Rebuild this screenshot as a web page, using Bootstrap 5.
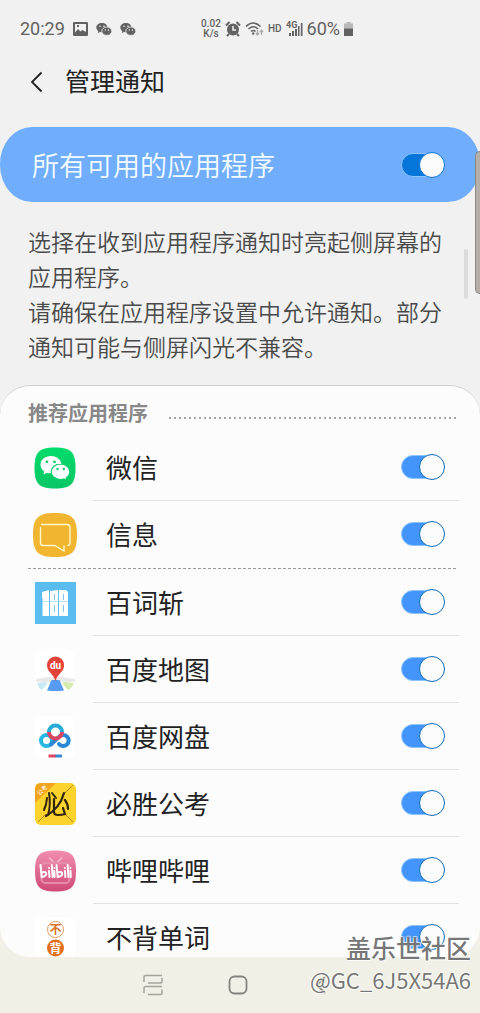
<!DOCTYPE html>
<html lang="zh-CN">
<head>
<meta charset="utf-8">
<meta name="viewport" content="width=device-width, initial-scale=1">
<title>管理通知</title>
<link href="https://cdn.jsdelivr.net/npm/bootstrap@5.3.0/dist/css/bootstrap.min.css" rel="stylesheet">
<style>
  body { font-family: Roboto, "Noto Sans CJK SC", sans-serif; background: #f1f1f1; color: #222; height: 100vh; }
  .status { height: 58px; padding: 0 127px 0 20px; color: #626262; font-size: 18px; line-height: 20px; }
  .rate { font-size: 10px; line-height: 10px; font-weight: 500; }
  .hd { font-size: 10px; line-height: 12px; font-weight: 500; }
  .appbar { height: 47px; padding-left: 30px; margin-bottom: 22px; gap: 21px; }
  .appbar h1 { font-size: 25px; line-height: 30px; font-weight: 400; padding-top: 2px; }
  .back { width: 14px; height: 24px; color: #222; }
  .master { height: 75px; padding: 0 35px 0 32px; border-radius: 32px / 37px; background: #70adfd; color: #f2fcff; font-size: 27px; line-height: 36px; font-weight: 350; }
  .intro { font-size: 23px; line-height: 35px; padding: 24px 30px 19px 28px; color: #4a4a4a; font-weight: 350; }
  .sheet-wrap { min-height: 0; background: linear-gradient(#f1f1f1 50%, #f0f0e6 50%); }
  .sheet { border-radius: 30px; background: #fcfcfc; border-top: 1px solid #d0d0d0; }
  .section-title { height: 48px; padding: 8px 24px 0 28px; gap: 21px; }
  .section-title h2 { font-size: 20px; line-height: 40px; font-weight: 700; color: #888; }
  .dots { height: 2px; background: repeating-linear-gradient(90deg, #a8a8a8 0 2px, transparent 2px 5px); }
  .dash { height: 1px; margin: 0 24px 0 28px; background: repeating-linear-gradient(90deg, #9c9c9c 0 3px, transparent 3px 5px); }
  .app { height: 67px; padding: 0 21px 0 33px; gap: 16px; }
  .app svg { width: 44px; height: 44px; }
  .app-body { padding: 0 14px 0 13px; border-bottom: 1px solid #e2e2e2; font-size: 26px; line-height: 36px; }
  .group .app:last-child .app-body { border-color: transparent; }
  .toggle { appearance: none; position: relative; width: 44px; height: 26px; margin: 0; --track: #4495fb; --edge: #0c6cb8; }
  .toggle::before { content: ""; position: absolute; left: 0; top: 1px; width: 38px; height: 24px; border-radius: 12px; background: var(--track); border: 1px solid #8bc4ff; }
  .toggle::after { content: ""; position: absolute; right: 0; top: 0; width: 26px; height: 26px; border-radius: 50%; background: #fcfcfc; border: 1px solid var(--edge); }
  .toggle:not(:checked)::before { background: #aaa; border-color: #aaa; }
  .toggle:not(:checked)::after { right: 18px; }
  .master .toggle { --track: #0675d9; --edge: #0675d9; }
  .sysnav { height: 56px; background: #f0f0e6; padding: 0 146px 0 142px; }
  .sysnav button { width: 22px; height: 24px; }
  .scroll-thumb { right: 12px; top: 249px; width: 4px; height: 50px; border-radius: 2px; background: #dcdcdc; }
  .edge-handle { right: 0; top: 151px; width: 5px; height: 143px; border-radius: 5px 0 0 5px; background: #b5aea9; border: 1px solid #8e8a87; border-right: 0; }
  .stamp { right: 9px; bottom: 18px; text-align: right; color: rgba(95,95,95,.85); line-height: 32px; text-shadow: 1px 1px 0 #fff8, -1px -1px 0 #fff8, -1px 1px 0 #fff8, 1px -1px 0 #fff8; pointer-events: none; font-family: "Noto Sans CJK SC", sans-serif; }
  .stamp-name { font-size: 25px; font-weight: 500; }
  .stamp-user { font-size: 22px; }
</style>
</head>
<body class="d-flex flex-column overflow-hidden position-relative">
  <header>
    <div class="status d-flex align-items-center justify-content-between">
      <div class="d-flex align-items-center gap-2">
        <span>20:29</span>
        <svg width="15" height="14" viewBox="0 0 15 14"><path fill="#626262" fill-rule="evenodd" d="M1 0h13q1 0 1 1v12q0 1-1 1H1q-1 0-1-1V1q0-1 1-1zM2 2v8.500l3-3.500 2.500 2.500 2-1.500L13 10V2zM4 3h2v2H4z"/></svg>
        <svg width="16" height="14" viewBox="0 0 16 14"><use href="#chat-mono"/></svg>
        <svg width="16" height="14" viewBox="0 0 16 14"><use href="#chat-mono"/></svg>
      </div>
      <div class="d-flex align-items-center">
        <span class="rate text-center me-1">0.02<br>K/s</span>
        <svg class="me-1" width="16" height="16" viewBox="0 0 16 16"><circle cx="8" cy="8.500" r="6" fill="#626262"/><path d="M1 4.500 4.500 1M15 4.500 11.500 1M4 13l-2 2M12 13l2 2" stroke="#626262" stroke-width="2"/><path d="M8 5v4h3" fill="none" stroke="#f1f1f1" stroke-width="1.500"/></svg>
        <svg class="me-1" width="19" height="16" viewBox="0 0 19 16"><g fill="none" stroke="#626262" stroke-width="1.600"><path d="M1 5.500q7-7 14.500 0M3.500 8q5-4.500 9.500 0M6 10.500q2.300-2 4.500 0"/></g><circle cx="8.200" cy="12.500" r="1.200" fill="#626262"/><path d="M12.500 9v5m-1.500-2 1.500 2 1.500-2M16.500 14V9m-1.500 2 1.500-2 1.500 2" fill="none" stroke="#aaa" stroke-width="1.300"/></svg>
        <span class="hd me-1">HD</span>
        <svg class="me-1" width="17" height="16" viewBox="0 0 17 16"><text x="0" y="7" font-size="9" font-weight="700" fill="#626262">4G</text><path d="M3 12h2v3H3zM6 10h2v5H6zM9 8h2v7H9zM12 5h1.500v10H12zM14.800 2h1.700v13h-1.700z" fill="#626262"/></svg>
        <span class="me-1">60%</span>
        <svg width="9" height="14" viewBox="0 0 9 14"><path fill="#b9b9b9" d="M2.500 0h4v1.500H9V7H0V1.500h2.500z"/><path fill="#626262" d="M0 6.500h9V14H0z"/></svg>
      </div>
    </div>
    <div class="appbar d-flex align-items-center">
      <button class="back btn p-0 border-0 d-flex align-items-center" aria-label="返回"><svg width="14" height="22" viewBox="0 0 14 22"><path d="M11.500 1.500 2 11l9.500 9.500" fill="none" stroke="currentColor" stroke-width="1.800"/></svg></button>
      <h1 class="mb-0">管理通知</h1>
    </div>
  </header>

  <main class="d-flex flex-column flex-grow-1 overflow-hidden">
    <label class="master d-flex align-items-center justify-content-between flex-shrink-0"><span class="pt-1">所有可用的应用程序</span><input class="toggle" type="checkbox" role="switch" checked></label>
    <p class="intro mb-0">选择在收到应用程序通知时亮起侧屏幕的应用程序。<br>请确保在应用程序设置中允许通知。部分通知可能与侧屏闪光不兼容。</p>

    <div class="sheet-wrap flex-grow-1">
      <section class="sheet h-100 overflow-hidden">
        <div class="section-title d-flex align-items-center">
          <h2 class="mb-0">推荐应用程序</h2>
          <div class="dots flex-grow-1 mt-2"></div>
        </div>
        <div class="group">
          <label class="app d-flex align-items-center">
            <svg viewBox="0 0 44 44"><defs><linearGradient id="wx" x2="0" y2="1"><stop stop-color="#04dc6c"/><stop offset="1" stop-color="#08c664"/></linearGradient></defs><path d="M22 1.500c16 0 20.500 4.500 20.500 20.500S38 42.500 22 42.500 1.500 38 1.500 22 6 1.500 22 1.500z" fill="url(#wx)"/><path d="M18 10c-6 0-10.500 3.800-10.500 8.700 0 2.800 1.500 5.200 3.800 6.800l-.9 3.100 3.700-1.900c4 1.200 9 .5 12-2.300 3-3 3-7.500.6-10.500C24.700 11.300 21.600 10 18 10z" fill="#fff"/><path d="M27.500 18c-5 0-9.300 3.300-9.300 7.700S22.500 33.500 27.500 33.500q1.800 0 3.400-.5l3.200 1.700-.9-2.800c2.200-1.500 3.600-3.700 3.600-6.200 0-4.300-4.200-7.700-9.300-7.700z" fill="#fff" stroke="#06ce67" stroke-width="1.200"/><g fill="#06ce67"><circle cx="14" cy="15.800" r="1.400"/><circle cx="21.500" cy="15.800" r="1.400"/><circle cx="24.500" cy="23" r="1.200"/><circle cx="30.800" cy="23" r="1.200"/></g></svg>
            <span class="app-body d-flex flex-grow-1 h-100 align-items-center justify-content-between"><span class="pt-1">微信</span><input class="toggle" type="checkbox" role="switch" checked></span>
          </label>
          <label class="app d-flex align-items-center">
            <svg viewBox="0 0 44 44"><path d="M22 0c17 0 22 5 22 22s-5 22-22 22S0 39 0 22 5 0 22 0z" fill="#f1b52f"/><path d="M8 11.500h26q3 0 3 3V30q0 2.500-2.500 2.500M31 32.500v5.500l-9-5.500H10q-2.500 0-2.500-2.500V14" fill="none" stroke="#fff8c8" stroke-width="1.400"/></svg>
            <span class="app-body d-flex flex-grow-1 h-100 align-items-center justify-content-between"><span class="pt-1">信息</span><input class="toggle" type="checkbox" role="switch" checked></span>
          </label>
        </div>
        <div class="dash"></div>
        <div class="group">
          <label class="app d-flex align-items-center">
            <svg viewBox="0 0 44 44"><path fill="#5bbcf0" d="M2 1h41v42H2z"/><path fill="#fff" fill-rule="evenodd" d="M9 11l7-2v26H9.500V17H9zM17 10l8-1v26h-8zM21 13v6h.8v-6zM21 24v7h.8v-7zM26 9h7l2 2v24h-9zM30 13v6h.8v-6zM30 24v7h.8v-7z"/><path d="M9 20.500h26" stroke="#8ccff4" stroke-width=".6"/></svg>
            <span class="app-body d-flex flex-grow-1 h-100 align-items-center justify-content-between"><span class="pt-1">百词斩</span><input class="toggle" type="checkbox" role="switch" checked></span>
          </label>
          <label class="app d-flex align-items-center">
            <svg viewBox="0 0 44 44"><rect x="2" y="1" width="40" height="42" rx="11" fill="#fff"/><path fill="#e9e9e7" d="M3 31l12-2h14l13 2v3H3z"/><path fill="#c8e9f6" d="M4 35l8-1 3 1-6 7q-4-2-5-7z"/><path fill="#d5edac" d="M29 35l3-1 9 1q-2 5-6 7z"/><path fill="#589bf2" d="M18.500 32h8L31 42.500q-8.500 1-17 0z"/><path fill="#e34338" d="M22.500 8.500a8.700 8.700 0 0 1 8.600 8.700c0 6.800-6.500 8-8.600 15.800C20.400 25.200 14 24 14 17.200a8.700 8.700 0 0 1 8.500-8.700z"/><text x="22.500" y="20.500" text-anchor="middle" font-size="10" font-weight="700" fill="#fff">du</text></svg>
            <span class="app-body d-flex flex-grow-1 h-100 align-items-center justify-content-between"><span class="pt-1">百度地图</span><input class="toggle" type="checkbox" role="switch" checked></span>
          </label>
          <label class="app d-flex align-items-center">
            <svg viewBox="0 0 44 44"><rect x="2" y="1" width="40" height="42" rx="8" fill="#fff"/><g fill="none" stroke-width="4"><circle cx="13.500" cy="25.500" r="5.500" stroke="#27b6e0"/><path d="M26 29a5.500 5.500 0 1 0 .2-7.300L18 29.500" stroke="#2989d6" stroke-linecap="round"/><path d="M16 17a6.500 6.500 0 0 0 13 0" stroke="#de4563"/><path d="M16 17a6.500 6.500 0 1 1 13 0" stroke="#25acd8"/></g><path fill="#df4761" d="M15.500 39.500H23v3h-7.500z"/><path fill="#348bd9" d="M22.500 39.500H29v3h-6.500z"/></svg>
            <span class="app-body d-flex flex-grow-1 h-100 align-items-center justify-content-between"><span class="pt-1">百度网盘</span><input class="toggle" type="checkbox" role="switch" checked></span>
          </label>
          <label class="app d-flex align-items-center">
            <svg viewBox="0 0 44 44"><rect x="2" y="1" width="41" height="42" rx="6" fill="#fbd32c"/><path d="M23 1H8Q2 1 2 7v14z" fill="#f2a51c"/><text transform="translate(6.500 14) rotate(-45)" font-size="6" fill="#fff">公考</text><path d="M31 12l9-9M5 40l8-8M32 32l8 8" stroke="#b4861c" stroke-width="1"/><g fill="none" stroke="#30250f" stroke-linecap="round"><path d="M14 16q-.5 7-3 12M16 11q2 12-1 22M19 11l4 5" stroke-width="2"/><path d="M31 11q-4 15-18 23M21 17v13q0 3 4 3t7-1l-2-6M32 18q3 4 3 9" stroke-width="2.200"/></g></svg>
            <span class="app-body d-flex flex-grow-1 h-100 align-items-center justify-content-between"><span class="pt-1">必胜公考</span><input class="toggle" type="checkbox" role="switch" checked></span>
          </label>
          <label class="app d-flex align-items-center">
            <svg viewBox="0 0 44 44"><defs><linearGradient id="bl" x2="0" y2="1"><stop stop-color="#f08eb0"/><stop offset="1" stop-color="#cf4a76"/></linearGradient></defs><path d="M22.500 1.500c16 0 20.500 4.500 20.500 20.500S38.500 42.500 22.500 42.500 2 38 2 22 6.500 1.500 22.500 1.500z" fill="url(#bl)"/><path d="M16 8.500l5 5M29 8.500l-5 5" stroke="#f5abc4" stroke-width="1.800"/><rect x="8.500" y="14" width="28" height="20" rx="4" fill="none" stroke="#e88aaa" stroke-width="2"/><g fill="none" stroke="#fff" stroke-width="2" stroke-linecap="round"><path d="M7.500 16l1.200 12q5-1 4.500-3.500t-4.500-1M23.500 16l1.200 12q5-1 4.500-3.500t-4.500-1M16 22l.5 6M18.800 16l.8 12M21.300 22l.3 6M32 22l.3 6M34.600 16l.8 12M37.500 22l.3 6"/></g><g fill="#fff"><circle cx="16" cy="19" r="1"/><circle cx="21.500" cy="19" r="1"/><circle cx="31.800" cy="19" r="1"/><circle cx="37.500" cy="19" r="1"/></g></svg>
            <span class="app-body d-flex flex-grow-1 h-100 align-items-center justify-content-between"><span class="pt-1">哔哩哔哩</span><input class="toggle" type="checkbox" role="switch" checked></span>
          </label>
          <label class="app d-flex align-items-center">
            <svg viewBox="0 0 44 44"><rect x="2" y="1" width="41" height="42" rx="8" fill="#fff"/><circle cx="22.500" cy="13.500" r="8" fill="#fff" stroke="#dc8848" stroke-width=".9"/><circle cx="22.500" cy="32" r="8.500" fill="#e0701f"/><g text-anchor="middle" font-size="12" font-weight="700"><text x="22.500" y="18" fill="#d9742a">不</text><text x="22.500" y="36.500" fill="#fff">背</text></g></svg>
            <span class="app-body d-flex flex-grow-1 h-100 align-items-center justify-content-between"><span class="pt-1">不背单词</span><input class="toggle" type="checkbox" role="switch" checked></span>
          </label>
        </div>
      </section>
    </div>
  </main>

  <nav class="sysnav d-flex align-items-center justify-content-between flex-shrink-0">
    <button class="btn p-0 border-0 d-flex align-items-center" aria-label="最近"><svg width="22" height="22" viewBox="0 0 22 22"><g fill="none" stroke="#a3a39c" stroke-width="1.500"><path d="M2 8V3q0-1.500 1.500-1.500H20M6 9h12.500Q20 9 20 7.500V4M2 19v-5q0-1.500 1.500-1.500H20M6 20.500h12.500q1.500 0 1.500-1.500v-3.500"/></g></svg></button>
    <button class="btn p-0 border-0 d-flex align-items-center" aria-label="主页"><svg width="22" height="22" viewBox="0 0 22 22"><rect x="2.500" y="2.500" width="17" height="17" rx="5" fill="none" stroke="#84847e" stroke-width="1.800"/></svg></button>
    <button class="btn p-0 border-0 d-flex align-items-center" aria-label="后退"><svg width="22" height="22" viewBox="0 0 22 22"><path d="M13 3 5 11l8 8" fill="none" stroke="#84847e" stroke-width="2"/></svg></button>
  </nav>

  <div class="scroll-thumb position-absolute"></div>
  <div class="edge-handle position-absolute"></div>
  <div class="stamp position-absolute"><div class="stamp-name">盖乐世社区</div><div class="stamp-user">@GC_6J5X54A6</div></div>

  <svg class="position-absolute" width="0" height="0" aria-hidden="true"><defs><g id="chat-mono"><path fill="#626262" d="M6 1C2.700 1 .3 3 .3 5.600c0 1.500.8 2.700 2 3.600l-.5 1.800L4 10l2 .2q5.500-.3 5.600-4.600C11.500 2.900 9 1 6 1z"/><path fill="#626262" stroke="#f1f1f1" stroke-width=".8" d="M10.800 5C7.900 5 5.800 6.900 5.800 9.200s2.200 4.200 5 4.200l1.600-.3 1.900.8-.5-1.500c1.300-.8 2-1.900 2-3.200C15.800 6.900 13.600 5 10.800 5z"/><g fill="#f1f1f1"><circle cx="4" cy="4.300" r=".8"/><circle cx="8" cy="4.300" r=".8"/><circle cx="9.200" cy="8" r=".7"/><circle cx="12.500" cy="8" r=".7"/></g></g></defs></svg>
<script src="https://cdn.jsdelivr.net/npm/bootstrap@5.3.0/dist/js/bootstrap.bundle.min.js"></script>
</body>
</html>
